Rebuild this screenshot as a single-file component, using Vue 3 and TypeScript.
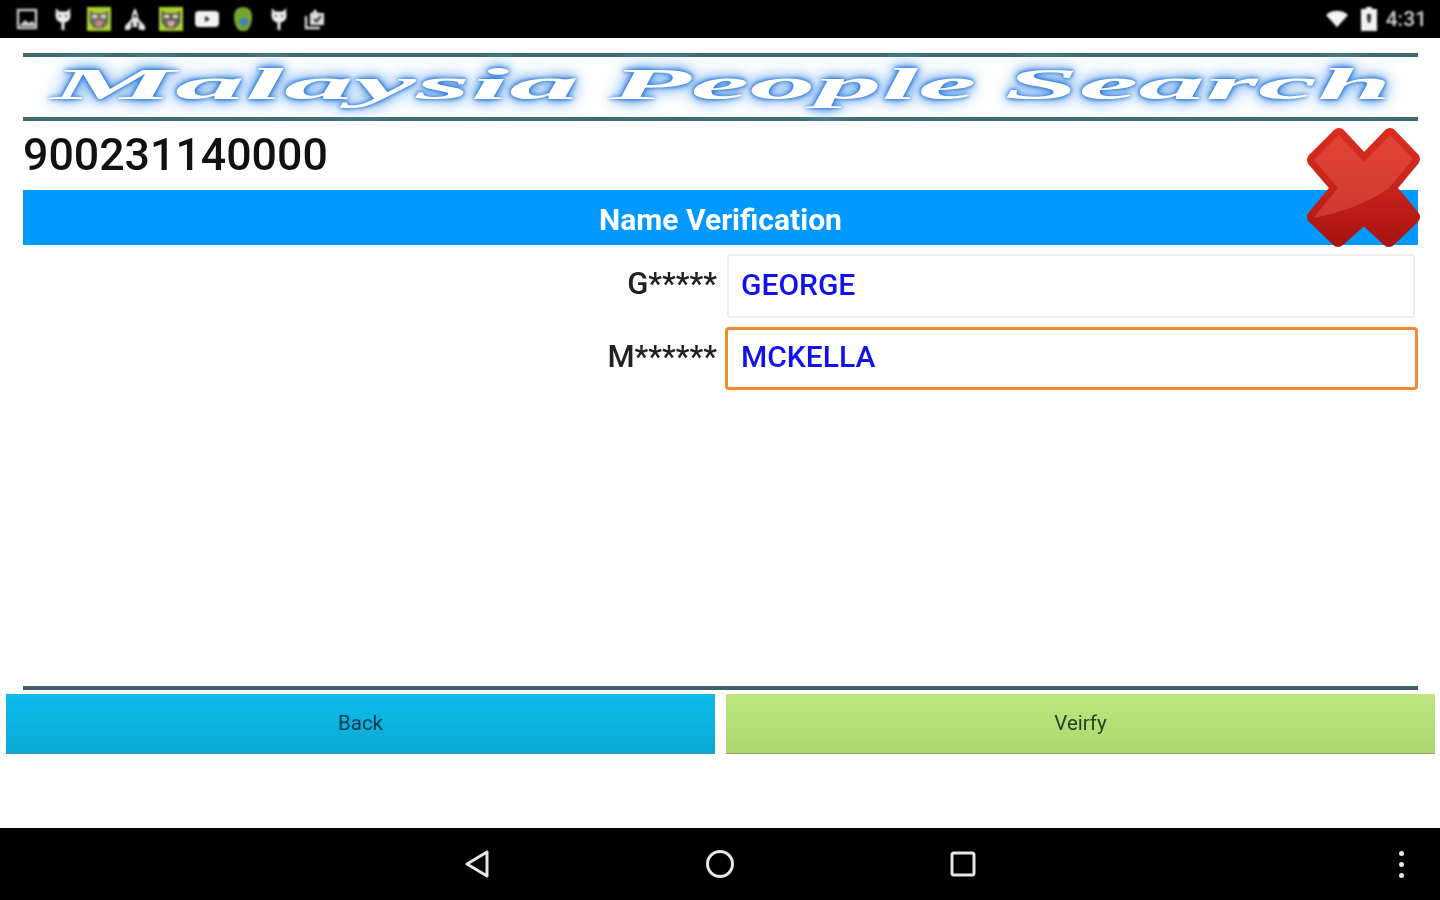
<template>
  <div class="screen">
    <div class="status-bar">
      <div class="status-inner">
        <div class="notifications">
          <svg class="note" viewBox="0 0 24 24"><rect x="3" y="3" width="18" height="18" fill="none" stroke="#ccc" stroke-width="2.4" /><path d="M4 19l6-6 4 3 3-2 3 3v2H4z" fill="#ccc" /></svg>
          <svg class="note" viewBox="0 0 24 24"><path d="M5 1l3 3.500h8L19 1l.5 8a7.500 7 0 0 1-6 6.500V23h-3v-7.500a7.500 7 0 0 1-6-6.500z" fill="#eee" /><circle cx="9" cy="9" r="1.300" fill="#777" /><circle cx="15" cy="9" r="1.300" fill="#777" /></svg>
          <svg class="note" viewBox="0 0 28 28">
            <rect width="28" height="28" fill="#a9d32c" />
            <path d="M3 4l5 3h12l5-3v14l-6 7H9l-6-7z" fill="#6c6b62" />
            <rect x="6" y="9" width="6" height="4" fill="#d9d2c2" /><rect x="16" y="9" width="6" height="4" fill="#d9d2c2" />
            <path d="M9 16h10l-2 7h-6z" fill="#c9848a" />
          </svg>
          <svg class="note" viewBox="0 0 24 24"><path d="M12 1l2.500 5 1 6 6.500 7v4h-5l-3-3h-5l-3 3H2v-4l6.500-7 1-6z" fill="#e6e6e6" /><circle cx="12" cy="9" r="1.800" fill="#333" /><path d="M8 15h2v6H8zM14 15h2v6h-2z" fill="#333" /></svg>
          <svg class="note" viewBox="0 0 28 28">
            <rect width="28" height="28" fill="#a9d32c" />
            <path d="M3 4l5 3h12l5-3v14l-6 7H9l-6-7z" fill="#5f5e58" />
            <rect x="6" y="9" width="6" height="4" fill="#d9d2c2" /><rect x="16" y="9" width="6" height="4" fill="#d9d2c2" />
            <path d="M9 16h10l-2 7h-6z" fill="#d0a0a0" />
          </svg>
          <svg class="note" viewBox="0 0 24 24"><rect x="0" y="4" width="24" height="16" rx="4" fill="#f2f2f2" /><path d="M10 9l5 3-5 3z" fill="#222" /></svg>
          <svg class="note" viewBox="0 0 24 24">
            <path d="M12 0c6 0 9 4 9 10 0 7-3 13-6 14h-5C6 23 3 17 3 10 3 4 6 0 12 0z" fill="#76a52f" />
            <circle cx="13" cy="15" r="4" fill="#3f7fc4" />
          </svg>
          <svg class="note" viewBox="0 0 24 24"><path d="M5 1l3 3.500h8L19 1l.5 8a7.500 7 0 0 1-6 6.500V23h-3v-7.500a7.500 7 0 0 1-6-6.500z" fill="#eee" /><circle cx="9" cy="9" r="1.300" fill="#777" /><circle cx="15" cy="9" r="1.300" fill="#777" /></svg>
          <svg class="note" viewBox="0 0 24 24"><path d="M9 6l3-4 3 4h6v12H7V6z" fill="#dcdcdc" /><path d="M11 12l2.500 2.500L18 9" fill="none" stroke="#333" stroke-width="2" /><path d="M3 9v12h14" fill="none" stroke="#dcdcdc" stroke-width="2.400" /></svg>
        </div>
        <div class="system">
          <svg class="wifi" viewBox="0 0 24 18"><path d="M0 4.500C7-1.500 17-1.500 24 4.500L12 18z" fill="#f4f4f4" /></svg>
          <svg class="battery" viewBox="0 0 16 24"><path d="M5 0h6v2h5v22H0V2h5z" fill="#f2f2f2" /><path d="M6 7h4v5l-1 4H7l-1-4z" fill="#333" /></svg>
          <span class="clock">4:31</span>
        </div>
      </div>
    </div>

    <div class="page">
      <div class="banner">
        <span>Malaysia</span>
        <span>People</span>
        <span>Search</span>
      </div>

      <div class="head">
        <div class="number">900231140000</div>
        <div class="title-bar">Name Verification</div>
        <svg class="close-x" viewBox="0 0 114 121">
          <defs>
            <linearGradient id="xFill" x1="0" y1="0" x2="0" y2="1">
              <stop offset="0" stop-color="#d92c20" />
              <stop offset="0.6" stop-color="#c4201a" />
              <stop offset="1" stop-color="#a81510" />
            </linearGradient>
            <clipPath id="xClip">
              <path :d="crossPath" />
            </clipPath>
          </defs>
          <path :d="crossPath" fill="url(#xFill)" stroke="url(#xFill)" stroke-width="14" stroke-linejoin="round" />
          <path d="M0 0H114V30C92 62 50 84 0 92z" fill="#f47a68" opacity="0.32" clip-path="url(#xClip)" />
        </svg>
      </div>

      <div class="fields">
        <div class="field-row">
          <span class="hint">G*****</span>
          <div class="name-box">GEORGE</div>
        </div>
        <div class="field-row focused">
          <span class="hint">M******</span>
          <div class="name-box">MCKELLA</div>
        </div>
      </div>

      <div class="bottom-rule"></div>
    </div>

    <div class="actions">
      <button class="action back">Back</button>
      <button class="action verify">Veirfy</button>
    </div>

    <div class="nav-bar">
      <div class="nav-inner">
        <svg class="nav-icon" viewBox="0 0 32 32"><path d="M26 4v24L6 16z" fill="none" stroke="#e6e6e6" stroke-width="3" stroke-linejoin="round" /></svg>
        <svg class="nav-icon" viewBox="0 0 32 32"><circle cx="16" cy="16" r="12.500" fill="none" stroke="#e6e6e6" stroke-width="3" /></svg>
        <svg class="nav-icon" viewBox="0 0 32 32"><rect x="5" y="5" width="22" height="22" rx="2" fill="none" stroke="#e6e6e6" stroke-width="3" /></svg>
        <div class="overflow"><i></i><i></i><i></i></div>
      </div>
    </div>
  </div>
</template>

<script setup lang="ts">
const crossPath =
  'M32 8 L57 35 L83 8 L106 32 L82 61 L106 90 L82 113 L57 90 L31 113 L7 90 L31 61 L7 33 Z'
</script>

<style>
html,
body {
  margin: 0;
  background: #fff;
}
</style>

<style scoped>
.screen {
  width: 1440px;
  height: 900px;
  display: flex;
  flex-direction: column;
  overflow: hidden;
  font-family: Roboto, "Liberation Sans", sans-serif;
  background: #fff;
}

.status-bar {
  height: 38px;
  flex: none;
  background: #000;
}

.status-inner {
  height: 100%;
  display: flex;
  align-items: center;
  justify-content: space-between;
  padding: 0 13px 0 15px;
  filter: blur(1px);
}

.notifications {
  display: flex;
  gap: 12px;
}

.note {
  width: 24px;
  height: 24px;
  display: block;
}

.system {
  display: flex;
  align-items: center;
}

.wifi {
  width: 22px;
  height: 18px;
  margin-right: 13px;
}

.battery {
  width: 16px;
  height: 24px;
  margin-right: 9px;
}

.clock {
  color: #d0d0d0;
  font-size: 21px;
  font-weight: 500;
}

.page {
  flex: none;
  height: 656px;
  padding: 0 22px 0 23px;
  display: flex;
  flex-direction: column;
  filter: blur(0.6px);
}

.banner {
  margin-top: 15px;
  height: 68px;
  box-sizing: border-box;
  border-top: 4px solid #3f6a70;
  border-bottom: 4px solid #3f6a70;
  display: grid;
  grid-template-columns: 530px 363px 382px;
  column-gap: 32px;
  align-items: center;
  padding: 0 0 6px 27px;
  font-family: "Liberation Serif", serif;
  font-style: italic;
  font-weight: 700;
  font-size: 44px;
  color: #fff;
  text-align: center;
  text-shadow: 0 0 2px #2a78d8, 0 0 3px #2a78d8, 0 0 6px #4b92e4, 0 0 10px #7fb3ee, 0 0 14px #b5d3f5;
}

.banner span {
  display: block;
  white-space: nowrap;
  transform: scaleX(3);
}

.banner span:first-child {
  transform: scaleX(3.18);
}

.banner span:last-child {
  transform: scaleX(3.05);
}

.head {
  position: relative;
}

.number {
  height: 69px;
  line-height: 69px;
  font-size: 44.7px;
  font-weight: 500;
  color: #111;
}

.title-bar {
  height: 55px;
  line-height: 60px;
  background: #0099ff;
  color: #fff;
  font-size: 30px;
  font-weight: 700;
  text-align: center;
}

.close-x {
  position: absolute;
  top: 6px;
  right: -3px;
  width: 114px;
  height: 121px;
}

.fields {
  padding-top: 9px;
  display: flex;
  flex-direction: column;
  gap: 9px;
}

.field-row {
  display: flex;
  justify-content: flex-end;
  gap: 10px;
}

.hint {
  font-size: 31px;
  font-weight: 500;
  line-height: 60px;
  color: #222;
}

.name-box {
  width: 688px;
  height: 64px;
  box-sizing: border-box;
  margin-right: 3px;
  padding-left: 12px;
  border: 2px solid #eeeeee;
  border-radius: 3px;
  font-size: 30px;
  font-weight: 500;
  line-height: 58px;
  color: #1212ee;
}

.focused {
  gap: 8px;
}

.focused .name-box {
  width: 693px;
  height: 63px;
  margin-right: 0;
  padding-left: 13px;
  border: 3px solid #f28b2c;
  border-radius: 4px;
  line-height: 54px;
}

.bottom-rule {
  margin-top: auto;
  margin-bottom: 4px;
  height: 4px;
  background: #3f5f68;
}

.actions {
  flex: none;
  display: flex;
  gap: 11px;
  padding: 0 5px 0 6px;
  filter: blur(0.5px);
}

.action {
  flex: 1;
  height: 60px;
  padding: 0 0 2px;
  border: none;
  font-family: Roboto, "Liberation Sans", sans-serif;
  font-size: 20.5px;
  color: #0d3a50;
}

.back {
  background: linear-gradient(#0cbce9, #0aa9d6);
  border-bottom: 1px solid #3b8fa8;
}

.verify {
  background: linear-gradient(#bde67e, #acd76f);
  border-bottom: 1px solid #8eae62;
  color: #2c3f22;
}

.nav-bar {
  flex: none;
  margin-top: auto;
  height: 72px;
  background: #000;
}

.nav-inner {
  height: 100%;
  position: relative;
  display: flex;
  align-items: center;
  justify-content: center;
  gap: 211px;
  filter: blur(0.5px);
}

.nav-icon {
  width: 32px;
  height: 32px;
}

.overflow {
  position: absolute;
  right: 36px;
  top: 23px;
  display: flex;
  flex-direction: column;
  gap: 6px;
}

.overflow i {
  width: 5px;
  height: 5px;
  background: #e6e6e6;
  border-radius: 50%;
}
</style>
